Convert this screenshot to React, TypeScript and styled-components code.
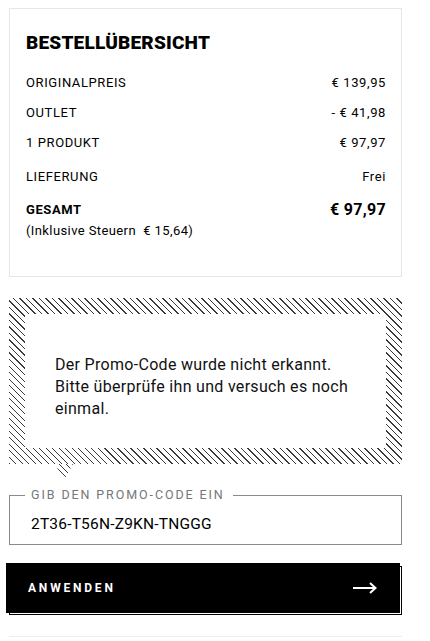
import React from "react";
import styled, { createGlobalStyle } from "styled-components";

const GlobalStyle = createGlobalStyle`
  html, body {
    margin: 0;
    padding: 0;
    background: #fff;
  }
  body {
    font-family: Roboto, "Noto Sans", Arial, sans-serif;
    color: #000;
    -webkit-font-smoothing: antialiased;
  }
`;

const hatch = `repeating-linear-gradient(45deg, #3a3a3a 0 1px, #fff 1px 4.6px)`;

const Page = styled.div`
  width: 393px;
  padding: 8px 0 0 9px;
  display: flex;
  flex-direction: column;
`;

const Summary = styled.section`
  border: 1px solid #e6e6e6;
  padding: 23px 15px 35px 16px;
`;

const Title = styled.h2`
  margin: 0 0 13px;
  font-size: 19px;
  line-height: 22px;
  font-weight: 900;
  letter-spacing: 0.2px;
`;

const Line = styled.div<{ $gap?: number; $bold?: boolean; $h?: number }>`
  display: flex;
  justify-content: space-between;
  align-items: center;
  height: ${(p) => p.$h ?? 30}px;
  margin-top: ${(p) => p.$gap ?? 0}px;
  font-size: 13px;
  font-weight: ${(p) => (p.$bold ? 700 : 400)};
  letter-spacing: 0.6px;
`;

const Value = styled.span<{ $big?: boolean }>`
  font-size: ${(p) => (p.$big ? 16 : 13)}px;
  font-weight: ${(p) => (p.$big ? 700 : 400)};
  letter-spacing: ${(p) => (p.$big ? 0.3 : 0.6)}px;
`;

const Note = styled.div`
  font-size: 13px;
  line-height: 20px;
  letter-spacing: 0.4px;
`;

const Callout = styled.div`
  position: relative;
  margin-top: 21px;
  padding: 16px;
  background: ${hatch};

  &::after {
    content: "";
    position: absolute;
    left: 46px;
    top: 100%;
    width: 18px;
    height: 16px;
    background: ${hatch};
    clip-path: polygon(0 0, 100% 0, 50% 100%);
  }
`;

const CalloutBody = styled.div`
  background: #fff;
  padding: 40px 30px 28px;
  font-size: 16px;
  line-height: 22px;
  letter-spacing: 0.3px;
  color: #111;
`;

const Field = styled.label`
  position: relative;
  display: block;
  margin-top: 31px;
  border: 1px solid #8a8a8a;
  height: 48px;
`;

const FieldLabel = styled.span`
  position: absolute;
  left: 15px;
  top: -8px;
  padding: 0 8px 0 6px;
  background: #fff;
  font-size: 12.5px;
  line-height: 14px;
  letter-spacing: 1.9px;
  color: #777;
`;

const FieldInput = styled.input`
  box-sizing: border-box;
  width: 100%;
  height: 100%;
  border: 0;
  outline: none;
  padding: 8px 0 0 21px;
  font-family: inherit;
  font-size: 15.5px;
  letter-spacing: 0.2px;
  color: #000;
  background: transparent;
`;

const ButtonWrap = styled.div`
  position: relative;
  margin-top: 21px;
  height: 49px;
  border: 1px solid #000;
  box-sizing: border-box;
`;

const Button = styled.button`
  position: absolute;
  left: -4px;
  top: -4px;
  width: 394px;
  height: 50px;
  border: 0;
  background: #000;
  color: #fff;
  display: flex;
  align-items: center;
  justify-content: space-between;
  padding: 0 22px 0 22px;
  font-family: inherit;
  font-size: 12px;
  font-weight: 700;
  letter-spacing: 2.8px;
  cursor: pointer;
`;

const Divider = styled.hr`
  margin: 21px 0 0;
  border: 0;
  border-top: 1px solid #ededed;
`;

const Arrow = () => (
  <svg width="25" height="12" viewBox="0 0 25 12" fill="none" stroke="#fff" strokeWidth="2">
    <path d="M0 6h23" />
    <path d="M17 1l5.5 5-5.5 5" />
  </svg>
);

export default function App() {
  return (
    <>
      <GlobalStyle />
      <Page>
        <Summary>
          <Title>BESTELLÜBERSICHT</Title>
          <Line>
            <span>ORIGINALPREIS</span>
            <Value>€ 139,95</Value>
          </Line>
          <Line>
            <span>OUTLET</span>
            <Value>- € 41,98</Value>
          </Line>
          <Line>
            <span>1 PRODUKT</span>
            <Value>€ 97,97</Value>
          </Line>
          <Line $gap={4}>
            <span>LIEFERUNG</span>
            <Value>Frei</Value>
          </Line>
          <Line $gap={6} $h={24} $bold>
            <span>GESAMT</span>
            <Value $big>€ 97,97</Value>
          </Line>
          <Note>(Inklusive Steuern&nbsp; € 15,64)</Note>
        </Summary>

        <Callout>
          <CalloutBody>
            Der Promo-Code wurde nicht erkannt. Bitte überprüfe ihn und versuch es noch einmal.
          </CalloutBody>
        </Callout>

        <Field>
          <FieldLabel>GIB DEN PROMO-CODE EIN</FieldLabel>
          <FieldInput defaultValue="2T36-T56N-Z9KN-TNGGG" />
        </Field>

        <ButtonWrap>
          <Button>
            <span>ANWENDEN</span>
            <Arrow />
          </Button>
        </ButtonWrap>

        <Divider />
      </Page>
    </>
  );
}
